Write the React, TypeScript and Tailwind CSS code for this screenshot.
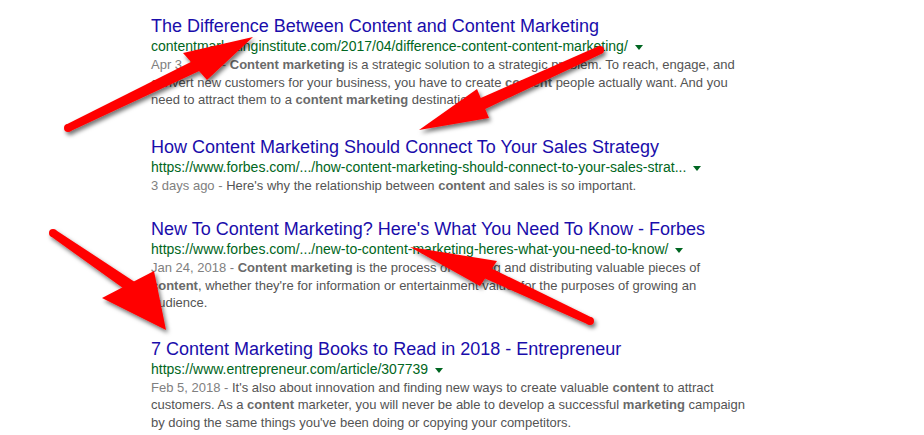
import React from 'react';

type Pt = [number, number];

interface Arrow {
  tail: Pt;
  tip: Pt;
  barbA: Pt;
  barbB: Pt;
}

const arrows: Arrow[] = [
  { tail: [68, 128], tip: [253, 37], barbA: [183, 53], barbB: [207, 80] },
  { tail: [600, 50], tip: [419, 130], barbA: [477, 89], barbB: [489, 118] },
  { tail: [590, 321], tip: [410, 247], barbA: [497, 261], barbB: [480, 286] },
  { tail: [53, 233], tip: [166, 330], barbA: [102, 298], barbB: [154, 271] },
];

// builds the polygon for one arrow: tapered shaft + triangle head
function shaftPoints(a: Arrow) {
  const baseX = (a.barbA[0] + a.barbB[0]) / 2;
  const baseY = (a.barbA[1] + a.barbB[1]) / 2;
  const dx = baseX - a.tail[0];
  const dy = baseY - a.tail[1];
  const len = Math.hypot(dx, dy);
  const nx = -dy / len;
  const ny = dx / len;
  const w0 = 4;
  const w1 = 6;
  // run the shaft a little into the head so there's no seam
  const ex = baseX + (dx / len) * 6;
  const ey = baseY + (dy / len) * 6;
  return [
    [a.tail[0] + nx * w0, a.tail[1] + ny * w0],
    [ex + nx * w1, ey + ny * w1],
    [ex - nx * w1, ey - ny * w1],
    [a.tail[0] - nx * w0, a.tail[1] - ny * w0],
  ]
    .map((p) => p.join(','))
    .join(' ');
}

function Arrows() {
  return (
    <svg
      className="absolute inset-0 pointer-events-none"
      width={924}
      height={435}
      viewBox="0 0 924 435"
    >
      <defs>
        <filter id="shadow" x="-20%" y="-20%" width="140%" height="140%">
          <feDropShadow dx="2" dy="3" stdDeviation="2.2" floodColor="#000" floodOpacity="0.55" />
        </filter>
      </defs>
      {arrows.map((a, i) => (
        <g key={i} filter="url(#shadow)" fill="#ff0000">
          <circle cx={a.tail[0]} cy={a.tail[1]} r={4} />
          <polygon points={shaftPoints(a)} />
          <polygon points={[a.tip, a.barbA, a.barbB].map((p) => p.join(',')).join(' ')} />
        </g>
      ))}
    </svg>
  );
}

interface Result {
  title: string;
  url: string;
  lines: React.ReactNode[];
  gap: string;
}

const results: Result[] = [
  {
    title: 'The Difference Between Content and Content Marketing',
    url: 'contentmarketinginstitute.com/2017/04/difference-content-content-marketing/',
    lines: [
      <>
        <span className="text-[#808080]">Apr 3, 2017 - </span>
        <b>Content marketing</b> is a strategic solution to a strategic problem. To reach, engage, and
      </>,
      <>
        convert new customers for your business, you have to create <b>content</b> people actually want. And you
      </>,
      <>
        need to attract them to a <b>content marketing</b> destination.
      </>,
    ],
    gap: 'mb-[27px]',
  },
  {
    title: 'How Content Marketing Should Connect To Your Sales Strategy',
    url: 'https://www.forbes.com/.../how-content-marketing-should-connect-to-your-sales-strat...',
    lines: [
      <>
        <span className="text-[#808080]">3 days ago - </span>
        Here's why the relationship between <b>content</b> and sales is so important.
      </>,
    ],
    gap: 'mb-[24px]',
  },
  {
    title: "New To Content Marketing? Here's What You Need To Know - Forbes",
    url: 'https://www.forbes.com/.../new-to-content-marketing-heres-what-you-need-to-know/',
    lines: [
      <>
        <span className="text-[#808080]">Jan 24, 2018 - </span>
        <b>Content marketing</b> is the process of creating and distributing valuable pieces of
      </>,
      <>
        <b>content</b>, whether they're for information or entertainment value, for the purposes of growing an
      </>,
      <>audience.</>,
    ],
    gap: 'mb-[26px]',
  },
  {
    title: '7 Content Marketing Books to Read in 2018 - Entrepreneur',
    url: 'https://www.entrepreneur.com/article/307739',
    lines: [
      <>
        <span className="text-[#808080]">Feb 5, 2018 - </span>
        It's also about innovation and finding new ways to create valuable <b>content</b> to attract
      </>,
      <>
        customers. As a <b>content</b> marketer, you will never be able to develop a successful <b>marketing</b> campaign
      </>,
      <>by doing the same things you've been doing or copying your competitors.</>,
    ],
    gap: '',
  },
];

export default function App() {
  return (
    <div className="relative w-[924px] h-[435px] overflow-hidden bg-white font-['Liberation_Sans',Arial,sans-serif]">
      <div className="pl-[151px] pt-[15px] flex flex-col">
        {results.map((r) => (
          <div key={r.title} className={r.gap}>
            <div className="text-[18px] leading-[22px] text-[#1a0dab] whitespace-nowrap">{r.title}</div>
            <div className="flex items-center text-[14px] leading-[19px] text-[#006621] whitespace-nowrap">
              <span>{r.url}</span>
              <span className="ml-[7px] mt-[2px] w-0 h-0 border-x-[4px] border-x-transparent border-t-[5px] border-t-[#006621]" />
            </div>
            <div className="text-[13px] leading-[17.5px] text-[#545454] whitespace-nowrap">
              {r.lines.map((l, i) => (
                <div key={i} className="[&_b]:font-bold [&_b]:text-[#6a6a6a]">
                  {l}
                </div>
              ))}
            </div>
          </div>
        ))}
      </div>
      <Arrows />
    </div>
  );
}
